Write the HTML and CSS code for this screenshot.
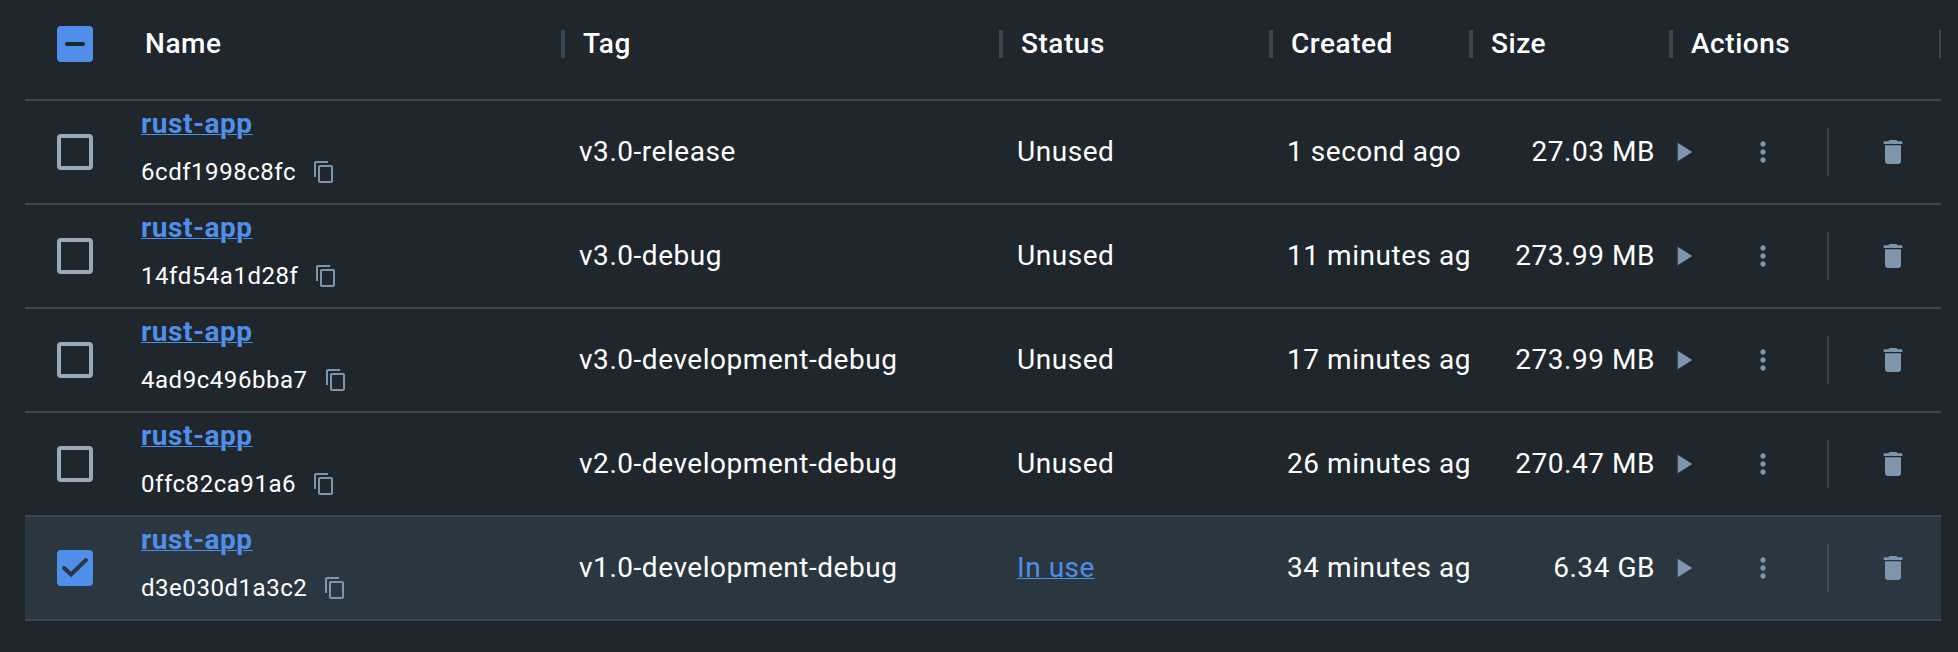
FILE: index.html
```
<!DOCTYPE html>
<html lang="en">
<head>
<meta charset="utf-8">
<title>Images</title>
<link rel="stylesheet" href="styles.css">
</head>
<body>
<svg class="sprite" aria-hidden="true">
  <symbol id="copy" viewBox="0 0 24 24"><path d="M16 1H4c-1.100 0-2 .9-2 2v14h2V3h12V1zm3 4H8c-1.100 0-2 .9-2 2v14c0 1.100.9 2 2 2h11c1.100 0 2-.9 2-2V7c0-1.100-.9-2-2-2zm0 16H8V7h11v14z"/></symbol>
  <symbol id="play" viewBox="0 0 24 24"><path d="M8 5v14l11-7z"/></symbol>
  <symbol id="more" viewBox="0 0 24 24"><path d="M12 8c1.100 0 2-.9 2-2s-.9-2-2-2-2 .9-2 2 .9 2 2 2zm0 2c-1.100 0-2 .9-2 2s.9 2 2 2 2-.9 2-2-.9-2-2-2zm0 6c-1.100 0-2 .9-2 2s.9 2 2 2 2-.9 2-2-.9-2-2-2z"/></symbol>
  <symbol id="trash" viewBox="0 0 24 24"><path d="M6 19c0 1.100.9 2 2 2h8c1.100 0 2-.9 2-2V7H6v12zM19 4h-3.500l-1-1h-5l-1 1H5v2h14V4z"/></symbol>
</svg>
<main class="table" id="table">
  <div class="row head">
    <div class="check"><span class="box on"><svg viewBox="0 0 36 36"><path d="M10 18H26"/></svg></span></div>
    <div class="th"><span>Name</span></div>
    <div class="th sep"><span>Tag</span></div>
    <div class="th sep"><span>Status</span></div>
    <div class="th sep"><span>Created</span></div>
    <div class="th sep"><span>Size</span></div>
    <div class="th sep last"><span>Actions</span></div>
  </div>
</main>
<script src="app.js"></script>
</body>
</html>
```
FILE: styles.css
```
* { box-sizing: border-box; }
body {
  margin: 0;
  height: 652px;
  overflow: hidden;
  background: #1f262c;
  color: #fff;
  font-family: Roboto, sans-serif;
  font-size: 28px;
  letter-spacing: 0.54px;
}
.sprite { position: absolute; width: 0; height: 0; }
.table { margin: 0 17px 0 25px; }
.row {
  display: grid;
  grid-template-columns: 100px 438px 438px 270px 200px 200px 1fr;
  height: 104px;
  border-bottom: 2px solid #394752;
  align-items: center;
}
.row.selected { background: #2b3740; }
.head { height: 101px; padding-bottom: 11px; }
.th {
  display: flex;
  align-items: center;
  height: 28px;
  padding-left: 20px;
  font-weight: 500;
}
.th span { padding-bottom: 2px; }
.sep { border-left: 4px solid #394752; margin-left: -2px; padding-left: 18px; }
.last { border-right: 2px solid #394752; }
.check { padding-left: 32px; display: flex; }
.box {
  width: 36px;
  height: 36px;
  border: 4px solid #98a9b9;
  border-radius: 4px;
}
.box.on { border: 0; background: #4f8fea; }
.box svg { display: block; width: 36px; height: 36px; }
.box path { fill: none; stroke: #1f262c; stroke-width: 4; stroke-linecap: round; }
.selected .box path { stroke: #2b3740; }
.name { padding-left: 16px; align-self: start; }
.link {
  color: #4f8fea;
  text-decoration: underline;
  text-decoration-thickness: 1px;
  text-underline-offset: 1px;
}
.name .link { display: block; width: max-content; font-weight: 700; line-height: 32px; margin-top: 7px; }
.id { display: flex; align-items: center; gap: 16px; margin-top: 12px; font-size: 24px; line-height: 40px; }
.icon { fill: #7f95ad; display: block; }
.copy { width: 24px; height: 24px; }
.tag, .status, .created { padding-left: 16px; }
.tag, .status, .created, .size { padding-bottom: 2px; }
.created { overflow: hidden; white-space: nowrap; margin-right: 2px; }
.size { text-align: right; padding-right: 16px; }
.actions { display: flex; align-items: center; height: 48px; margin-left: -4px; }
.actions .icon { width: 32px; height: 32px; }
.more { margin-left: 48px; }
.rule { width: 2px; height: 48px; margin-left: 48px; background: #394047; }
.selected .rule { background: #434e57; }
.trash { margin-left: 48px; }
```
FILE: app.js
```
const images = [
  ["6cdf1998c8fc", "v3.0-release", "Unused", "1 second ago", "27.03 MB"],
  ["14fd54a1d28f", "v3.0-debug", "Unused", "11 minutes ago", "273.99 MB"],
  ["4ad9c496bba7", "v3.0-development-debug", "Unused", "17 minutes ago", "273.99 MB"],
  ["0ffc82ca91a6", "v2.0-development-debug", "Unused", "26 minutes ago", "270.47 MB"],
  ["d3e030d1a3c2", "v1.0-development-debug", "In use", "34 minutes ago", "6.34 GB"],
];
const icon = (name) => `<svg class="icon ${name}"><use href="#${name}"/></svg>`;
const table = document.getElementById("table");
for (const [id, tag, status, created, size] of images) {
  const used = status === "In use";
  table.insertAdjacentHTML("beforeend", `
  <div class="row ${used ? "selected" : ""}">
    <div class="check"><span class="box ${used ? "on" : ""}">${used ? '<svg viewBox="0 0 36 36"><path d="M7 18l7 6.500L29 10"/></svg>' : ""}</span></div>
    <div class="name"><a class="link">rust-app</a><div class="id"><span>${id}</span>${icon("copy")}</div></div>
    <div class="tag">${tag}</div>
    <div class="status">${used ? `<a class="link">${status}</a>` : status}</div>
    <div class="created">${created}</div>
    <div class="size">${size}</div>
    <div class="actions">${icon("play")}${icon("more")}<span class="rule"></span>${icon("trash")}</div>
  </div>`);
}
```
